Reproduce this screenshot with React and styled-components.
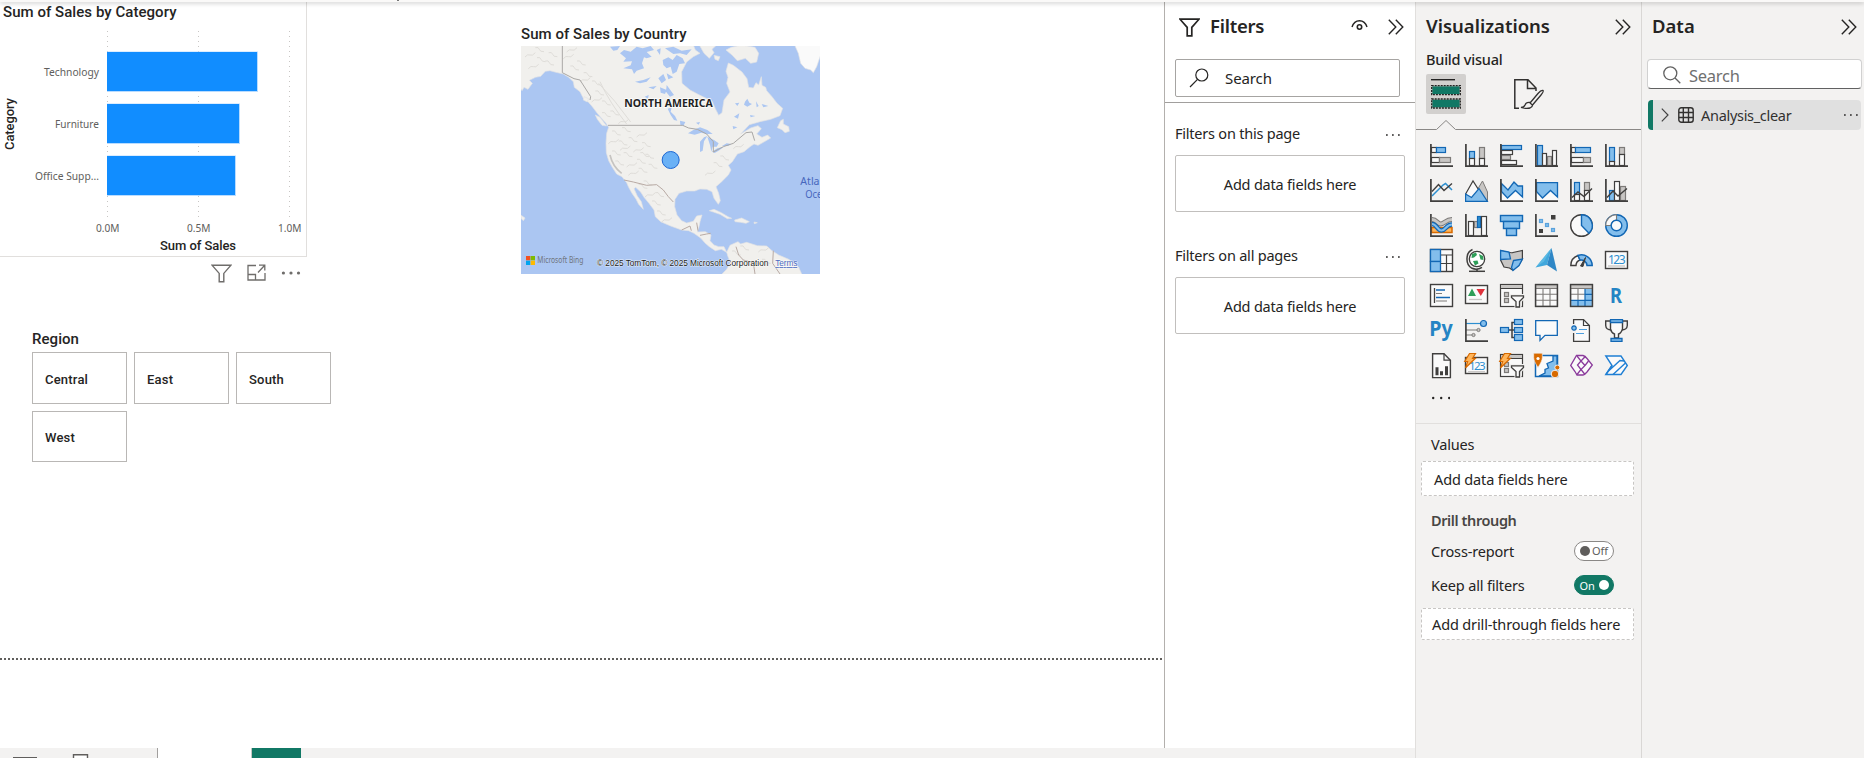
import React from "react";
import styled, { createGlobalStyle } from "styled-components";

const UI = `"Noto Sans", "Open Sans", "Liberation Sans", sans-serif`;
const DIN = `Roboto, "Liberation Sans", sans-serif`;

const GlobalStyle = createGlobalStyle`
  * { box-sizing: border-box; }
  body { margin: 0; background: #fff; color: #252423; font-family: ${UI}; overflow: hidden; }
  svg { display: block; flex: none; }
`;

const Window = styled.div`
  display: flex;
  flex-direction: column;
  width: 1864px;
  height: 758px;
  overflow: hidden;
`;
const RibbonEdge = styled.div`
  height: 2px;
  flex: none;
  background: #faf9f8;
  box-shadow: 0 1px 4px rgba(0, 0, 0, 0.3);
  z-index: 2;
`;
const RibbonMark = styled.div`
  width: 2px;
  height: 1px;
  margin-left: 397px;
  background: #777;
`;
const Panes = styled.div`
  display: flex;
  flex: 1;
  min-height: 0;
`;
const MainArea = styled.div`
  width: 1415px;
  display: flex;
  flex-direction: column;
`;
const MainRow = styled.div`
  display: flex;
  height: 746px;
`;
const Canvas = styled.main`
  width: 1164px;
  display: flex;
  flex-direction: column;
`;
const CanvasPage = styled.div`
  height: 658px;
  border-bottom: 2px solid transparent;
  background: repeating-linear-gradient(90deg, #605e5c 0 2px, transparent 2px 4px) bottom / 100% 2px no-repeat border-box;
`;
const VisualRow = styled.div`
  display: flex;
  align-items: flex-start;
  gap: 214px;
`;
const ChartColumn = styled.div`
  width: 307px;
`;
const ChartCard = styled.section`
  width: 307px;
  height: 255px;
  border: solid #e1dfdd;
  border-width: 0 1px 1px 0;
`;
const VisualActions = styled.div`
  display: flex;
  justify-content: flex-end;
  gap: 15px;
  padding: 7px 6px 0 0;
`;
const MapVisual = styled.section`
  padding-top: 22px;
`;
const VisualTitle = styled.h3`
  margin: 0;
  padding: 0 0 2px ${(p) => p.$indent || "0"};
  font: 500 15px/20px ${DIN};
  letter-spacing: 0.05px;
  white-space: nowrap;
`;
const Slicer = styled.section`
  padding: 46px 0 0 32px;
  width: 341px;
`;
const SlicerGrid = styled.div`
  display: flex;
  flex-wrap: wrap;
  gap: 7px;
  padding-top: 1px;
`;
const SlicerButton = styled.button`
  width: 95px;
  height: 51.5px;
  padding: 3px 0 0 12px;
  text-align: left;
  background: #fff;
  border: 1px solid #b9b7b5;
  color: #252423;
  font: 500 13px ${DIN};
  letter-spacing: 0.2px;
`;

const StatusBar = styled.footer`
  display: flex;
  height: 10px;
  background: #f3f2f1;
`;
const ViewSwitch = styled.div`
  width: 158px;
  border-right: 1px solid #a19f9d;
`;
const PageTab = styled.div`
  width: 94px;
  background: #fff;
  border-right: 1px solid #c8c6c4;
`;
const AddPage = styled.div`
  width: 49px;
  background: #117865;
`;

const FilterPane = styled.aside`
  width: 251px;
  border-left: 1px solid #b3b0ad;
`;
const FilterTop = styled.div`
  height: 101px;
  border-bottom: 1px solid #a19f9d;
  padding: 0 10px;
`;
const PaneHeader = styled.header`
  display: flex;
  align-items: center;
  height: ${(p) => p.$height || "50px"};
  padding: ${(p) => p.$pad || "0"};
`;
const PaneTitle = styled.h2`
  margin: 0;
  flex: 1;
  padding: 0 0 2px ${(p) => p.$indent || "0"};
  font: 600 18.5px/24px ${UI};
  letter-spacing: ${(p) => p.$track || "-0.25px"};
`;
const HeaderActions = styled.div`
  display: flex;
  align-items: center;
  gap: 20px;
`;
const FilterSearch = styled.div`
  display: flex;
  align-items: center;
  gap: 16px;
  width: 225px;
  height: 38px;
  margin-top: 7px;
  padding-left: 13px;
  border: 1px solid #a6a4a2;
  border-radius: 2px;
  font-size: 15px;
  letter-spacing: -0.1px;
`;
const FilterGroup = styled.section`
  padding: ${(p) => p.$top} 10px 0 10px;
`;
const GroupHeader = styled.div`
  display: flex;
  justify-content: space-between;
  align-items: center;
  height: 22px;
  margin-bottom: 11px;
  padding-right: 5px;
  font-size: 14.5px;
  letter-spacing: -0.22px;
`;
const GroupMore = styled.span`
  padding-top: 4px;
`;
const FilterWell = styled.div`
  display: flex;
  align-items: center;
  justify-content: center;
  height: 57px;
  border: 1px solid #c1bfbd;
  border-radius: 2px;
  font-size: 14.5px;
  letter-spacing: -0.2px;
`;

const VizPane = styled.aside`
  width: 226px;
  background: #f3f2f1;
  border-left: 1px solid #e1dfdd;
`;
const BuildLabel = styled.div`
  padding: 0 0 2px 10px;
  font: 500 14.5px/18px ${UI};
  letter-spacing: -0.22px;
`;
const ModeTabs = styled.div`
  display: flex;
  align-items: center;
  gap: 48px;
  padding: 4px 0 0 10px;
`;
const ModeTab = styled.div`
  display: flex;
  align-items: center;
  justify-content: center;
  width: 40px;
  height: 40px;
  border-radius: 2px;
  background: ${(p) => (p.$active ? "#d2d0ce" : "transparent")};
  & + & { width: 30px; }
`;
const VizGallery = styled.div`
  display: grid;
  grid-template-columns: repeat(6, 23px);
  grid-auto-rows: 23px;
  gap: 12px;
  padding: 13px 0 0 14px;
  svg { overflow: visible; }
`;
const MoreRow = styled.div`
  height: 47px;
  padding: 19px 0 0 16px;
  border-bottom: 1px solid #e1dfdd;
`;
const FieldLabel = styled.div`
  display: flex;
  align-items: center;
  justify-content: space-between;
  height: ${(p) => p.$height};
  padding: ${(p) => p.$drop || "0"} 27px 0 15px;
  font-size: 14.5px;
  font-weight: ${(p) => (p.$strong ? 600 : 400)};
  color: ${(p) => (p.$strong ? "#484644" : "#252423")};
  letter-spacing: ${(p) => (p.$strong ? "-0.4px" : "-0.17px")};
`;
const FieldWell = styled.div`
  display: flex;
  align-items: center;
  width: 213px;
  height: ${(p) => p.$height};
  margin: ${(p) => p.$margin};
  padding-left: ${(p) => p.$indent};
  background: #fff;
  border: 1px dashed #c8c6c4;
  border-radius: 2px;
  font-size: 14.5px;
  letter-spacing: -0.14px;
  white-space: nowrap;
`;
const Switch = styled.span`
  display: flex;
  flex-direction: ${(p) => (p.$on ? "row-reverse" : "row")};
  align-items: center;
  justify-content: center;
  gap: ${(p) => (p.$on ? "4px" : "2px")};
  width: 40px;
  height: 20px;
  border-radius: 10px;
  border: 1px solid ${(p) => (p.$on ? "#117865" : "#8a8886")};
  background: ${(p) => (p.$on ? "#117865" : "#fff")};
  color: ${(p) => (p.$on ? "#fff" : "#605e5c")};
  font-size: 11px;
  letter-spacing: -0.1px;
  &::before {
    content: "";
    width: 10px;
    height: 10px;
    border-radius: 50%;
    background: ${(p) => (p.$on ? "#fff" : "#605e5c")};
  }
`;

const DataPane = styled.aside`
  width: 223px;
  background: #f3f2f1;
  border-left: 1px solid #d9d7d5;
`;
const DataSearch = styled.div`
  display: flex;
  align-items: center;
  gap: 8px;
  width: 215px;
  height: 30px;
  margin: 7px 0 11px 5px;
  padding: 2px 0 0 15px;
  background: #fff;
  border: 1px solid #d1d1d1;
  border-bottom-color: #616161;
  border-radius: 4px;
  color: #707070;
  font-size: 16.5px;
  letter-spacing: -0.25px;
`;
const TableRow = styled.div`
  display: flex;
  align-items: center;
  width: 213px;
  height: 30px;
  margin-left: 6px;
  padding: 0 3px 0 8px;
  border-left: 5px solid #117865;
  border-radius: 4px;
  background: #e0e0e0;
  color: #323130;
  font-size: 14.5px;
`;
const TableName = styled.span`
  flex: 1;
  padding: 0 0 1px 7px;
  letter-spacing: -0.3px;
`;

const Chevrons = () => (
  <svg width="16" height="16" viewBox="0 0 16 16" fill="none" stroke="#252423" strokeWidth="1.4">
    <path d="M.8 .8 7.8 8 .8 15.2M7.8 .8 14.8 8 7.8 15.2" />
  </svg>
);
const Dots = ({ r = 0.9, gap = 6, color = "#323130" }) => (
  <svg width={gap * 2 + 2 * r} height="4" viewBox={`0 0 ${gap * 2 + 2 * r} 4`} fill={color}>
    <circle cx={r} cy="2" r={r} />
    <circle cx={r + gap} cy="2" r={r} />
    <circle cx={r + 2 * gap} cy="2" r={r} />
  </svg>
);
const Funnel = ({ sw, color }) => (
  <svg width="21" height="19" viewBox="0 0 21 19" fill="none" stroke={color} strokeWidth={sw}>
    <path d="M1 1.2H20L12.8 9.4V17.8H8.2V9.4Z" />
  </svg>
);

const BARS = [
  { label: "Technology", y: 52, w: 150, labelWidth: 55 },
  { label: "Furniture", y: 104, w: 132, labelWidth: 44 },
  { label: "Office Supp...", y: 156, w: 128, labelWidth: 64 },
];
const TICKS = [
  { label: "0.0M", x: 107.5 },
  { label: "0.5M", x: 198.5 },
  { label: "1.0M", x: 289.5 },
];

const BarChart = () => (
  <svg width="306" height="232" viewBox="0 24 306 232" fontFamily={UI} fontSize="11.5" fill="#605e5c">
    {TICKS.map((t) => (
      <g key={t.label}>
        <path d={`M${t.x} 31V219`} stroke="#c8c6c4" strokeDasharray="1 4" />
        <text x={t.x - 11.5} y="232" textLength="23.5" lengthAdjust="spacingAndGlyphs">{t.label}</text>
      </g>
    ))}
    {BARS.map((b) => (
      <g key={b.label}>
        <rect x="107" y={b.y - 0.5} width={b.w + 1} height="40.5" fill="#b9dcff" />
        <rect x="107" y={b.y} width={b.w} height="39" fill="#118dff" />
        <text x={99 - b.labelWidth} y={b.y + 24} textLength={b.labelWidth} lengthAdjust="spacingAndGlyphs">{b.label}</text>
      </g>
    ))}
    <g fontFamily={DIN} fontSize="13" fontWeight="500" fill="#252423">
      <text x="160" y="250" textLength="76">Sum of Sales</text>
      <text transform="translate(14 150) rotate(-90)" textLength="52">Category</text>
    </g>
  </svg>
);

const RIDGES = [
  [100, 200], [125, 180], [150, 190], [90, 165], [160, 165], [120, 150], [205, 170], [225, 205], [245, 190], [215, 150],
  [265, 225], [290, 250], [255, 240], [300, 280], [320, 310], [290, 300], [345, 340], [320, 345], [370, 365],
  [350, 400], [380, 390], [340, 425], [370, 430], [400, 420], [425, 405], [350, 460], [385, 465], [415, 450], [440, 435],
  [360, 490], [395, 495], [425, 485], [450, 470], [400, 520], [430, 512], [460, 500], [375, 445], [435, 465],
  [430, 560], [450, 585], [470, 610], [485, 640], [500, 660], [445, 550], [480, 585], [630, 520], [655, 495], [675, 475], [715, 440],
  [710, 760], [735, 745], [790, 750], [740, 790], [800, 785],
];

const NorthAmericaMap = () => (
  <svg width="299" height="228" viewBox="63 138 897 684">
    <rect x="63" y="138" width="897" height="684" fill="#abc6f2" />
    <g fill="#f1f0ed" stroke="#e2e3e4" strokeWidth="2" strokeLinejoin="round">
      <path d="M60 135V262L66 272 72 262 84 268 97 250 88 241 106 232 122 229 136 214 150 212 168 217 190 222 206 232 220 245 223 262 240 275 250 295 264 305 277 320 292 340 302 352 317 368 326 382 320 400 318 430 319 458 326 482 337 502 350 522 366 530 380 548 386 562 396 580 408 597 416 613 430 628 424 605 412 588 402 566 407 562 422 576 432 592 447 610 462 630 466 650 482 665 512 678 545 690 566 692 582 700 602 714 616 730 628 740 646 752 664 748 680 757 672 740 656 740 642 735 630 722 633 705 616 695 592 696 597 680 600 665 606 645 590 648 580 664 560 669 545 662 531 645 524 620 525 598 537 580 560 573 584 573 600 567 620 568 636 575 642 595 655 613 661 602 656 580 648 560 665 545 685 525 693 510 685 496 697 485 712 462 732 455 750 440 762 432 774 436 790 427 812 414 803 405 786 412 770 402 784 386 774 377 752 384 722 402 748 374 780 365 812 358 840 347 848 325 831 310 816 290 800 272 797 262 786 256 784 230 776 255 768 248 760 264 746 262 741 236 726 216 700 196 685 189 678 214 684 232 680 250 690 276 672 300 666 338 656 346 646 326 636 303 600 286 570 270 546 250 545 215 560 186 580 170 600 160 586 150 580 135Z" />
      <path d="M598 135 612 160 628 175 642 158 636 148 650 135ZM678 150 694 142 725 135 765 142 776 160 770 186 752 190 736 175 712 182 696 165ZM642 166 660 170 655 182 645 178Z" />
      <path d="M884 135 895 160 902 190 915 205 932 210 940 218 950 200 962 165V135Z" fill="#fafafa" />
      <path d="M832 383 842 362 850 358 850 372 866 380 868 394 855 398 846 389Z" />
      <path d="M628 632 642 628 664 638 684 650 695 655 682 656 660 643 640 636ZM704 660 725 654 748 665 738 670 722 667 705 665ZM762 666 772 668 763 671Z" />
      <path d="M680 757 690 736 714 725 722 732 740 727 772 737 800 738 816 752 836 765 866 778 884 790 896 802 906 824H664L680 808 692 788 684 770Z" />
      <path d="M62 645 75 654 70 662 64 656ZM252 290 266 296 262 306 250 300ZM286 345 300 352 320 378 306 376 292 358Z" />
    </g>
    <g fill="#abc6f2">
      <path d="M360 160 372 150 392 155 410 140 428 145 452 138 462 150 440 156 455 170 440 175 432 172 426 190 432 205 410 212 402 222 396 208 370 205 392 196 396 184 370 185 378 175Z" />
      <path d="M405 245 430 240 452 232 440 245 420 250ZM475 235 490 222 498 240 485 250ZM480 262 500 270 495 282 482 278ZM500 255 522 285 510 290 498 275ZM434 290 446 285 444 296ZM445 262 470 258 460 268ZM330 140 360 138 352 150 340 152Z" />
      <path d="M488 180 505 172 518 180 530 165 548 175 555 190 538 192 530 215 518 222 512 200 500 205 490 195ZM495 145 520 140 545 152 575 148 560 165 540 160 520 162ZM470 150 482 145 480 165ZM500 220 520 232 505 238Z" />
      <path d="M503 326 515 322 512 335 525 348 532 362 522 360 512 345ZM540 362 556 366 550 378 541 374ZM588 368 600 366 596 374ZM564 400 580 390 600 382 622 390 638 402 620 402 604 398 584 404Z" />
      <path d="M600 425 612 412 622 408 612 424 608 452 600 456ZM622 410 642 420 656 430 650 440 638 440 634 455 630 435ZM636 455 652 445 672 440 658 451 644 459ZM666 438 680 430 694 432 684 438Z" />
      <path d="M735 305 742 296 748 308 756 312 742 320 732 314ZM768 304 776 318 770 322ZM702 350 718 340 714 356ZM750 345 766 348 752 352ZM698 378 712 382 700 388ZM785 312 805 318 790 322ZM705 310 718 308 712 318Z" />
    </g>
    <g fill="none" stroke="#dfddd9" strokeWidth="3">
      {RIDGES.map(([x, y], i) => (
        <path key={i} d={i % 3 ? `M${x - 14} ${y - 7}q10 -3 12 5t14 7` : `M${x - 15} ${y + 6}q8 -10 15 -6t16 -7`} />
      ))}
      <path d="M296 250Q345 300 392 366M300 245Q330 310 380 372" />
      <path d="M330 465Q338 500 365 520" stroke="#c6c4c1" strokeWidth="5" />
    </g>
    <g fill="none" stroke="#aaa8a6" strokeWidth="3">
      <path d="M187 135V218L222 236 240 240 272 290 270 300M324 376H548L566 384 592 388 620 402 640 425 640 456 670 440 700 430 738 398 756 396 764 422" />
      <path d="M372 540 400 546 440 556 470 554 490 570 505 590 520 606M545 690 570 678 574 692M590 668 594 692M600 706 620 702 632 700M708 740 716 765 730 780 760 788 765 822M820 752 818 790 840 822" stroke="#b8aaa4" />
    </g>
    <circle cx="512" cy="480" r="25.5" fill="#6ab1f6" stroke="#1e67d2" strokeWidth="3" />
    <g fontFamily={UI}>
      <text x="373" y="321" fontSize="33" fontWeight="700" textLength="265" lengthAdjust="spacingAndGlyphs" fill="#222" stroke="#fff" strokeWidth="4" paintOrder="stroke">NORTH AMERICA</text>
      <g fontSize="33" fill="#4767bd">
        <text x="901" y="556" textLength="112" lengthAdjust="spacingAndGlyphs">Atlantic</text>
        <text x="916" y="594" textLength="84" lengthAdjust="spacingAndGlyphs">Ocean</text>
      </g>
    </g>
    <rect x="78" y="768" width="13" height="13" fill="#f25022" />
    <rect x="92" y="768" width="13" height="13" fill="#7fba00" />
    <rect x="78" y="782" width="13" height="13" fill="#00a4ef" />
    <rect x="92" y="782" width="13" height="13" fill="#ffb900" />
    <text x="112" y="790" fontSize="24" fontFamily={UI} textLength="138" lengthAdjust="spacingAndGlyphs" fill="#6f757d">Microsoft Bing</text>
    <g fontFamily={`"Liberation Sans", sans-serif`} fontSize="25" stroke="#fff" strokeOpacity=".7" strokeWidth="3" paintOrder="stroke">
      <text x="291" y="798" textLength="514" fill="#1c1c1c">© 2025 TomTom, © 2025 Microsoft Corporation</text>
      <text x="826" y="798" textLength="66" fill="#4a69c0" textDecoration="underline">Terms</text>
    </g>
  </svg>
);

const D = "#403f3e";
const B = "#1267b4";
const LB = "#83beec";
const G = "#7d7b79";
const LG = "#c8c6c4";
const W = "#fafafa";

const Axis = () => <path d="M.9 0V22.1H23" fill="none" stroke={D} strokeWidth="1.7" />;
const Box = ({ x, y, w, h, f = W, s = D, sw = 1.2 }) => (
  <rect x={x + 0.5} y={y + 0.5} width={w - 1} height={h - 1} fill={f} stroke={s} strokeWidth={sw} />
);
const Bolt = () => (
  <path d="M4.5 -.5H10.5L7.5 4.3H10.5L.6 13.8 2.6 7.5H-.3Z" fill="#ffb55a" stroke="#d86a00" strokeWidth="1.2" />
);
const SlicerGlyph = () => (
  <>
    <Box x={0} y={0} w={23} h={23} />
    <rect x="1" y="1" width="21" height="3" fill={LG} />
    <path d="M0 4.5H23" stroke={D} />
    <Box x={4} y={8} w={5} h={5} f={LG} s={G} />
    <Box x={4} y={14} w={5} h={5} f={LG} s={G} />
    <path d="M11.5 11.5H23.5V14L20 17.5V23.5H16V17.5L11.5 13.5Z" fill={W} stroke="#f3f2f1" strokeWidth="3" />
    <path d="M11.5 11.8H23.5V13.5L19.5 17.5V23H16V17.5L11.5 13.5Z" fill={W} stroke={D} strokeWidth="1.3" />
  </>
);

const GLYPHS = [
  <><Box x={1} y={3} w={6} h={6} /><Box x={6} y={3} w={10} h={6} f={LB} s={B} /><Box x={1} y={13} w={9} h={6} /><Box x={9} y={13} w={12} h={6} f={LG} s={G} /><Axis /></>,
  <><Box x={4} y={7} w={6} h={8} f={LB} s={B} /><Box x={4} y={14} w={6} h={8} /><Box x={14} y={3} w={6} h={12} f={LG} s={G} /><Box x={14} y={14} w={6} h={8} /><Axis /></>,
  <><Box x={1} y={1} w={21} h={5} f={LB} s={B} /><Box x={1} y={6} w={12} h={5} /><Box x={1} y={11} w={10} h={5} f={LG} s={G} /><Box x={1} y={16} w={16} h={5} /><Axis /></>,
  <><Box x={2} y={1} w={6} h={21} f={LB} s={B} /><Box x={7} y={9} w={5} h={13} /><Box x={12} y={12} w={5} h={10} f={LG} s={G} /><Box x={17} y={6} w={5} h={16} /><Axis /></>,
  <><Box x={1} y={3} w={5} h={6} /><Box x={5} y={3} w={16} h={6} f={LB} s={B} /><Box x={1} y={13} w={13} h={6} /><Box x={13} y={13} w={8} h={6} f={LG} s={G} /><Axis /></>,
  <><Box x={4} y={3} w={6} h={15} f={LB} s={B} /><Box x={4} y={17} w={6} h={5} /><Box x={14} y={3} w={6} h={8} f={LG} s={G} /><Box x={14} y={10} w={6} h={12} /><Axis /></>,
  <><path d="M2 17 13 6 15.5 4.5 22 11" fill="none" stroke="#2d8fd0" strokeWidth="1.5" /><path d="M2 12.5 8.5 5.5 14 11.5 22 4.5" fill="none" stroke={D} strokeWidth="1.4" /><Axis /></>,
  <><path d="M11 13 17.5 2 22.5 13V22.5H14Z" fill={LG} stroke={G} /><path d="M.6 15 8 2 15 13V22.4H.6Z" fill={W} stroke={D} strokeWidth="1.2" /><path d="M.6 15 6.5 18.5 14 9.5 22.4 22.4H.6Z" fill={LB} stroke={B} strokeWidth="1.2" /></>,
  <><path d="M1 15 7.5 19 15.5 11.5 22.5 18V22H1Z" fill={W} /><path d="M1.5 4.5 8 11 14 3 18 7H22.5V18L15.5 11.5 7.5 19 1.5 12.5Z" fill={LB} stroke={B} strokeWidth="1.3" /><Axis /></>,
  <><path d="M1 15 7.5 19 15.5 11.5 22.5 18V22H1Z" fill={W} /><path d="M1.5 3.6H22.5V18L15.5 11.5 7.5 19 1.5 12.5Z" fill={LB} stroke={B} strokeWidth="1.3" /><Axis /></>,
  <><Box x={4} y={3} w={6} h={13} f={LB} s={B} /><Box x={4} y={15} w={6} h={7} /><Box x={14} y={3} w={6} h={9} f={LG} s={G} /><Box x={14} y={11} w={6} h={11} /><path d="M2 18.5 8 13 14 17.5 22 9.5" fill="none" stroke={D} strokeWidth="1.4" /><Axis /></>,
  <><Box x={4} y={11} w={6} h={11} f={LB} s={B} /><Box x={9} y={2} w={6} h={20} /><Box x={15} y={7} w={6} h={15} f={LG} s={G} /><path d="M2 18.5 8 12 13 17 22 9.5" fill="none" stroke={D} strokeWidth="1.4" /><Axis /></>,
  <><path d="M1.5 13.5H22V18.5H1.5Z" fill="#ffb55a" stroke="#d86a00" strokeWidth="1.5" /><path d="M2 5.5C7 5.5 7 10 10.5 10S16 5.5 22 5.5" fill="none" stroke={G} strokeWidth="5" /><path d="M2 5.5C7 5.5 7 10 10.5 10S16 5.5 22 5.5" fill="none" stroke={LG} strokeWidth="3" /><path d="M2 10C7 10 7 16.5 11.5 16.5S16 10.5 22 10.5" fill="none" stroke={B} strokeWidth="4.6" /><path d="M2 10C7 10 7 16.5 11.5 16.5S16 10.5 22 10.5" fill="none" stroke={LB} strokeWidth="2.2" /><Axis /></>,
  <><Box x={3} y={7} w={6} h={15} /><Box x={9} y={7} w={4} h={7} f={LG} s={G} /><Box x={12} y={2} w={4} h={12} f="#2d8fd0" s={B} /><Box x={16} y={2} w={6} h={20} /><Axis /></>,
  <><Box x={0} y={1} w={23} h={7} f={LB} s={B} sw={1.4} /><Box x={3} y={7} w={17} h={8} f={LB} s={B} sw={1.4} /><Box x={6} y={14} w={11} h={8} f={LB} s={B} sw={1.4} /></>,
  <><rect x="16" y="1" width="4.5" height="4.5" fill={D} /><rect x="4" y="15" width="4" height="4" fill={D} /><Box x={4} y={5} w={4} h={4} f={LB} s="#5aa2dc" /><Box x={10} y={9} w={4} h={4} f={LB} s="#5aa2dc" /><Box x={16} y={14} w={4} h={4} f={LB} s="#5aa2dc" /><Axis /></>,
  <><circle cx="11.5" cy="11.5" r="10.8" fill={W} stroke={D} strokeWidth="1.4" /><path d="M11.5 .7A10.8 10.8 0 0 1 19 19.2L11.5 11.5Z" fill={LB} stroke={B} strokeWidth="1.4" /></>,
  <><circle cx="11.5" cy="11.5" r="10.8" fill={LB} stroke={B} strokeWidth="1.4" /><path d="M11.5 .7A10.8 10.8 0 0 0 .7 11.5H6A5.5 5.5 0 0 1 11.5 6Z" fill={W} stroke={G} strokeWidth="1.1" /><circle cx="11.5" cy="11.5" r="5.3" fill={W} stroke={B} strokeWidth="1.4" /></>,
  <><Box x={0} y={0} w={23} h={23} sw={1.4} /><Box x={0} y={0} w={11} h={13} f={LB} s={B} sw={1.3} /><Box x={0} y={12} w={11} h={11} f={LB} s={B} sw={1.3} /><path d="M11 6H22.5M11 14.5H22.5M16.5 6V22.5" stroke={D} strokeWidth="1.2" /></>,
  <><circle cx="12" cy="10" r="7.7" fill="#fff" stroke={D} strokeWidth="1.3" /><path d="M7 5 11 3.5 12 6 9 8.5 6.5 9ZM14 5 18 7 18.5 11 15.5 10.5ZM8 12 12.5 11.5 13.5 14.5 10 16.5Z" fill="#2e9e58" /><path d="M7.5 .5C.2 3.5 .2 16 7 19.3Q12 21.5 17 18.3M12 20V22" fill="none" stroke={D} strokeWidth="1.5" /><path d="M4 22.3H20" stroke={D} strokeWidth="1.5" /></>,
  <><path d="M.6 1.5Q11 4.5 13 3.5L22.4 1.5V10L18.5 16.5 12.5 21 9.5 19 4 18 .6 11Z" fill={LG} stroke={D} strokeWidth="1.2" /><path d="M.6 1.5 9 3 10.5 10 .6 10.5ZM13.5 11.5 22.4 10 19 16.5 13 21.5 11.5 18.5Z" fill={LB} stroke={B} strokeWidth="1.3" /></>,
  <><path d="M16.5 -1 .5 18.5 12 16Z" fill="#41a7dc" /><path d="M16.5 -1 12 16 22 22.5Z" fill="#2f87c6" /><path d="M16.5 -1 9 12.5 .5 18.5Z" fill="#6cc5e8" opacity=".6" /></>,
  <><path d="M.8 16.5A10.7 10.7 0 0 1 8 6.5L10 11A6 6 0 0 0 6 16.5Z" fill={W} stroke={D} strokeWidth="1.4" /><path d="M8 6.5A10.7 10.7 0 0 1 22.2 16.5H17A6 6 0 0 0 10 11Z" fill={LB} stroke={B} strokeWidth="1.5" /><path d="M10.5 17 15.5 8.5 13 17.5Z" fill={D} stroke={D} /></>,
  <><Box x={0} y={2} w={23} h={18} sw={1.4} /><text x="3" y="14.5" fontFamily={UI} fontSize="12" textLength="17.5" fill="#2d8fd0">123</text><path d="M3 17H20" stroke={LG} strokeWidth="1.3" /></>,
  <><Box x={0} y={0} w={23} h={23} sw={1.4} /><path d="M4.5 4V19" stroke={D} strokeWidth="1.3" /><path d="M6 6H15M6 13.5H20" stroke={B} strokeWidth="1.6" /><path d="M6 9.5H12M6 17H17" stroke={G} strokeWidth="1.2" /></>,
  <><Box x={0} y={1} w={23} h={19} sw={1.4} /><path d="M3 12 7 4.5 11 12Z" fill="#2e9e58" /><path d="M11.5 5H20L15.8 12Z" fill="#e0323c" /><path d="M4 15.5H17" stroke={LG} strokeWidth="1.3" /></>,
  <SlicerGlyph />,
  <><Box x={0} y={0} w={23} h={23} /><rect x="1" y="1" width="21" height="3" fill={LG} /><path d="M.5 4.5H22.5M.5 10.3H22.5M.5 16.3H22.5M8 4.5V22.5M15 4.5V22.5" stroke={G} strokeWidth="1.1" /><rect x=".6" y=".6" width="21.8" height="21.8" fill="none" stroke={D} strokeWidth="1.4" /></>,
  <><Box x={0} y={0} w={23} h={23} /><rect x="1" y="1" width="21" height="3" fill={LG} /><path d="M15 5H22V22H1V16H15Z" fill={LB} /><path d="M.5 4.5H22.5M.5 10.3H15M8 4.5V16" stroke={G} strokeWidth="1.1" /><path d="M15 5V22M1 16.3H22M15 10.3H22M8 16V22" stroke={B} strokeWidth="1.2" /><rect x=".6" y=".6" width="21.8" height="21.8" fill="none" stroke={D} strokeWidth="1.4" /></>,
  <text x="11" y="18.5" textAnchor="middle" fontFamily={UI} fontWeight="700" fontSize="21" textLength="12" lengthAdjust="spacingAndGlyphs" fill="#2584c4">R</text>,
  <text x="-.8" y="16.5" fontFamily={UI} fontWeight="700" fontSize="21" textLength="23.5" lengthAdjust="spacingAndGlyphs" fill="#2584c4">Py</text>,
  <><path d="M1 4.5H16" stroke="#2d8fd0" strokeWidth="1.2" /><path d="M1 11H12M1 16H7" stroke={G} strokeWidth="1.2" /><circle cx="18.5" cy="4.5" r="3" fill={LB} stroke={B} strokeWidth="1.2" /><circle cx="13.5" cy="11" r="1.6" fill={LG} stroke={G} /><circle cx="8.5" cy="16" r="1.6" fill={LG} stroke={G} /><Axis /></>,
  <><path d="M8 11H12V3.5H14M12 11V18.5H14M12 11H14" fill="none" stroke={D} strokeWidth="1.5" /><Box x={0} y={8} w={9} h={6} f={LB} s={B} /><Box x={14} y={0} w={9} h={6} f={LB} s={B} /><Box x={14} y={8} w={9} h={6} f={LB} s={B} /><Box x={14} y={15} w={9} h={7} f={LB} s={B} /></>,
  <path d="M.7 1.7H22.3V16.3H10L5 21.5V16.3H.7Z" fill={W} stroke={B} strokeWidth="1.3" />,
  <><path d="M3.6 .6H13.5L19.4 6.5V22.4H3.6Z" fill={W} stroke={D} strokeWidth="1.3" /><path d="M13.5 .6V6.5H19.4" fill="none" stroke={D} strokeWidth="1.2" /><path d="M1 5H6V14H1Z" fill="#f3f2f1" /><circle cx="4" cy="9" r="2.2" fill={LB} stroke={B} strokeWidth="1.2" /><path d="M9 10.5H17M6 14.5H14" stroke="#4c9fe0" strokeWidth="1.2" /></>,
  <><path d="M5 2H.7V6.5Q1 11 6.5 11M18 2H22.3V6.5Q22 11 16.5 11" fill="none" stroke={D} strokeWidth="1.4" /><path d="M5.5 2.5H17.5V10Q16 14.5 13.5 15V19H9.5V15Q6.5 14 5.5 10Z" fill={W} stroke={D} strokeWidth="1.4" /><path d="M5.5 .7H17.5V3.5H5.5ZM6 19.5H17V22.3H6Z" fill={LB} stroke={B} strokeWidth="1.3" /></>,
  <g transform="translate(0 -.8)"><path d="M2.6 .6H14L20.4 7V24.4H2.6Z" fill={W} stroke={D} strokeWidth="1.4" /><path d="M14 .6V7H20.4" fill="none" stroke={D} strokeWidth="1.2" /><path d="M7 14V22M11.5 18V22M16.5 13V22" stroke={D} strokeWidth="3" /></g>,
  <><Box x={0} y={3} w={23} h={17} sw={1.4} /><text x="4" y="15.5" fontFamily={UI} fontSize="11.5" textLength="16.5" fill="#2d8fd0">123</text><path d="M3 17.7H20" stroke={LG} strokeWidth="1.3" /><Bolt /></>,
  <><SlicerGlyph /><Bolt /></>,
  <><Box x={0} y={1} w={23} h={22} f={W} s={B} sw={1.5} /><path d="M22 1.8H18V7L12 9.5 13.5 14 10 15.5V19L4 22H22Z" fill={LB} stroke={B} strokeWidth="1.3" /><circle cx="20" cy="20" r="3.8" fill="#d86a00" stroke="#f3f2f1" /><circle cx="22.3" cy="13.5" r="2.5" fill="#d86a00" stroke="#f3f2f1" /><path d="M3 13.5Q-1.3 7-1.3 3.5V-.8H7.3V3.5Q7.3 7 3 13.5Z" fill="#d86a00" stroke="#f3f2f1" strokeWidth=".6" /><circle cx="3" cy="4.5" r="1.6" fill="#fff" /></>,
  <g fill="none" stroke="#8a3a9b" strokeWidth="1.3" transform="translate(0 -.5)"><path d="M6.5 2H13Q15 2.5 17 5L22.3 11.5 17 18.5Q14 21.5 13 21.5H7L5 18 .7 12Z" fill={W} /><path d="M7 2.5 11 7.5 7.5 11.5 11 16 7 21M11 7.5 15.5 2.8M11 7.5 15 12 11 16 15 21M15 12 18.5 7.5" /></g>,
  <g fill={W} stroke="#1f7fd4" strokeWidth="1.4"><path d="M.8 2H16L22.3 11.5 16 20.5H.8L7 11.5Z" /><path d="M3 17.5 15 6.5 19 7M8 20.5 20.5 9M1 20.5 7 11.5" fill="none" /></g>,
];

export default function App() {
  return (
    <Window>
      <GlobalStyle />
      <RibbonEdge><RibbonMark /></RibbonEdge>
      <Panes>
        <MainArea>
          <MainRow>
            <Canvas>
              <CanvasPage>
                <VisualRow>
                  <ChartColumn>
                    <ChartCard>
                      <VisualTitle $indent="3px">Sum of Sales by Category</VisualTitle>
                      <BarChart />
                    </ChartCard>
                    <VisualActions>
                      <Funnel sw={1.4} color="#6f6d6b" />
                      <svg width="19" height="17" viewBox="0 0 19 17" fill="none" stroke="#6f6d6b" strokeWidth="1.3">
                        <path d="M9 1.5H1V16H18V9M1 10.5H8.5V16M11 8.5 17.5 1.5M12 1.2H17.8V6.5" />
                      </svg>
                      <svg width="20" height="17" viewBox="0 0 20 17" fill="#6f6d6b">
                        <circle cx="2.4" cy="9" r="1.6" /><circle cx="10" cy="9" r="1.6" /><circle cx="17.5" cy="9" r="1.6" />
                      </svg>
                    </VisualActions>
                  </ChartColumn>
                  <MapVisual>
                    <VisualTitle>Sum of Sales by Country</VisualTitle>
                    <NorthAmericaMap />
                  </MapVisual>
                </VisualRow>
                <Slicer>
                  <VisualTitle>Region</VisualTitle>
                  <SlicerGrid>
                    {["Central", "East", "South", "West"].map((r) => (
                      <SlicerButton key={r}>{r}</SlicerButton>
                    ))}
                  </SlicerGrid>
                </Slicer>
              </CanvasPage>
            </Canvas>
            <FilterPane>
              <FilterTop>
                <PaneHeader $pad="0 1px 0 4px">
                  <Funnel sw={1.7} color="#252423" />
                  <PaneTitle $indent="10px">Filters</PaneTitle>
                  <HeaderActions>
                    <svg width="17" height="14" viewBox="0 -.5 17 14" fill="none" stroke="#252423" strokeWidth="1.4">
                      <path d="M1 6.5Q3 .2 8.5 .2T16 6.5" /><circle cx="8.5" cy="6.5" r="2.2" strokeWidth="1.6" />
                    </svg>
                    <Chevrons />
                  </HeaderActions>
                </PaneHeader>
                <FilterSearch>
                  <svg width="20" height="20" viewBox="0 0 20 20" fill="none" stroke="#252423" strokeWidth="1.2">
                    <circle cx="12.8" cy="7" r="6" /><path d="M8.5 11.3 1 19" />
                  </svg>
                  Search
                </FilterSearch>
              </FilterTop>
              <FilterGroup $top="19px">
                <GroupHeader>Filters on this page<GroupMore><Dots /></GroupMore></GroupHeader>
                <FilterWell>Add data fields here</FilterWell>
              </FilterGroup>
              <FilterGroup $top="32px">
                <GroupHeader>Filters on all pages<GroupMore><Dots /></GroupMore></GroupHeader>
                <FilterWell>Add data fields here</FilterWell>
              </FilterGroup>
            </FilterPane>
          </MainRow>
          <StatusBar>
            <ViewSwitch>
              <svg width="157" height="10" viewBox="0 0 157 10" fill="none" stroke="#605e5c">
                <path d="M13 9.5H37" /><path d="M73.5 11V6.7H87.5V11" strokeWidth="1.4" fill="#fff" />
              </svg>
            </ViewSwitch>
            <PageTab />
            <AddPage />
          </StatusBar>
        </MainArea>
        <VizPane>
          <PaneHeader $height="48px" $pad="2px 10px 0 10px">
            <PaneTitle $track="0px">Visualizations</PaneTitle>
            <Chevrons />
          </PaneHeader>
          <BuildLabel>Build visual</BuildLabel>
          <ModeTabs>
            <ModeTab $active>
              <svg width="30" height="30" viewBox="0 0 30 30">
                <path d="M0 .7H24" stroke="#252423" strokeWidth="1.4" />
                <g fill="#117865">
                  <rect x=".7" y="6.7" width="28.6" height="9" /><rect x=".7" y="20" width="28.6" height="9" />
                </g>
                <g fill="none" stroke="#d2d0ce" strokeWidth="1.3">
                  <rect x=".7" y="6.7" width="28.6" height="9" /><rect x=".7" y="20" width="28.6" height="9" />
                </g>
                <g fill="none" stroke="#252423" strokeWidth="1.3" strokeDasharray="2 1">
                  <rect x=".7" y="6.7" width="28.6" height="9" /><rect x=".7" y="20" width="28.6" height="9" />
                </g>
              </svg>
            </ModeTab>
            <ModeTab>
              <svg width="30" height="30" viewBox="0 0 30 30" fill="none" stroke="#323130" strokeWidth="1.5">
                <path d="M5 29.3H.8V.8H14L22 9V12M13.5 .8V9.5H22" />
                <path d="M29 11.5Q27 11 24 14.5L16 24 18.5 26 27 16Q30 12.5 29 11.5ZM16 23.5Q12 23 11 26 10 28.5 7 28.5 12 30 16 29 19 27.5 18.5 25.5" fill="#f3f2f1" strokeWidth="1.3" />
              </svg>
            </ModeTab>
          </ModeTabs>
          <svg width="225" height="17" viewBox="0 0 225 17" fill="none" stroke="#8a8886" strokeWidth="1">
            <path d="M0 15.5H20.5L30 6.5 39.5 15.5H225" />
          </svg>
          <VizGallery>
            {GLYPHS.map((glyph, i) => (
              <svg key={i} width="23" height="23" viewBox="0 0 23 23">{glyph}</svg>
            ))}
          </VizGallery>
          <MoreRow><Dots r={1.2} gap={8} color="#252423" /></MoreRow>
          <FieldLabel $height="37px" $drop="3px">Values</FieldLabel>
          <FieldWell $height="35px" $indent="12px" $margin="0 0 8px 5px">Add data fields here</FieldWell>
          <FieldLabel $strong $height="31px">Drill through</FieldLabel>
          <FieldLabel $height="31px">Cross-report<Switch>Off</Switch></FieldLabel>
          <FieldLabel $height="38px">Keep all filters<Switch $on>On</Switch></FieldLabel>
          <FieldWell $height="32px" $indent="10px" $margin="4px 0 0 5px">Add drill-through fields here</FieldWell>
        </VizPane>
        <DataPane>
          <PaneHeader $pad="0 7px 0 10px">
            <PaneTitle $track="0px">Data</PaneTitle>
            <Chevrons />
          </PaneHeader>
          <DataSearch>
            <svg width="18" height="18" viewBox="0 0 18 18" fill="none" stroke="#616161" strokeWidth="1.3">
              <circle cx="7.3" cy="7.3" r="6.5" /><path d="M12 12 17.3 17.3" />
            </svg>
            Search
          </DataSearch>
          <TableRow>
            <svg width="8" height="14" viewBox="0 0 8 14" fill="none" stroke="#424242" strokeWidth="1.2"><path d="M.8 .6 7 7 .8 13.4" /></svg>
            <svg width="25" height="16" viewBox="-9 0 25 16" fill="none" stroke="#323130" strokeWidth="1.4">
              <rect x=".8" y=".8" width="14.4" height="14.4" rx="2.5" /><path d="M.8 5.5H15.2M.8 10.5H15.2M5.3 .8V15.2M10.5 .8V15.2" />
            </svg>
            <TableName>Analysis_clear</TableName>
            <Dots />
          </TableRow>
        </DataPane>
      </Panes>
    </Window>
  );
}
